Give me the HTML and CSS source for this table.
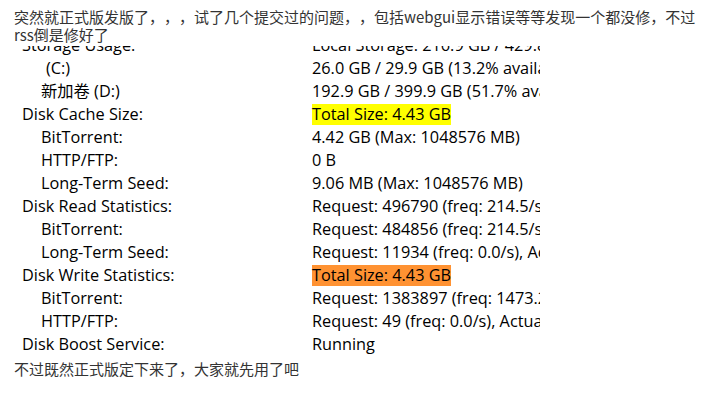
FILE: index.html
```html
<!DOCTYPE html>
<html lang="zh">
<head>
<meta charset="utf-8">
<link rel="stylesheet" href="styles.css">
</head>
<body>
<div class="post">
  <p class="post-text">突然就正式版发版了，，，试了几个提交过的问题，，包括webgui显示错误等等发现一个都没修，不过<br>rss倒是修好了</p>
  <div class="shot">
    <div class="stats">
      <div class="label l1">Storage Usage:</div><div class="value">Local Storage: 216.9 GB / 429.8 GB</div>
      <div class="label l2 drive">(C:)</div><div class="value">26.0 GB / 29.9 GB (13.2% available)</div>
      <div class="label l2">新加卷 (D:)</div><div class="value">192.9 GB / 399.9 GB (51.7% available)</div>
      <div class="label l1">Disk Cache Size:</div><div class="value"><span class="hl yellow">Total Size: 4.43 GB</span></div>
      <div class="label l2">BitTorrent:</div><div class="value">4.42 GB (Max: 1048576 MB)</div>
      <div class="label l2">HTTP/FTP:</div><div class="value">0 B</div>
      <div class="label l2">Long-Term Seed:</div><div class="value">9.06 MB (Max: 1048576 MB)</div>
      <div class="label l1">Disk Read Statistics:</div><div class="value">Request: 496790 (freq: 214.5/s), Actual: 0</div>
      <div class="label l2">BitTorrent:</div><div class="value">Request: 484856 (freq: 214.5/s), Actual: 0</div>
      <div class="label l2">Long-Term Seed:</div><div class="value">Request: 11934 (freq: 0.0/s), Actual: 0</div>
      <div class="label l1">Disk Write Statistics:</div><div class="value"><span class="hl orange">Total Size: 4.43 GB</span></div>
      <div class="label l2">BitTorrent:</div><div class="value">Request: 1383897 (freq: 1473.2/s), Actual: 0</div>
      <div class="label l2">HTTP/FTP:</div><div class="value">Request: 49 (freq: 0.0/s), Actual: 0</div>
      <div class="label l1">Disk Boost Service:</div><div class="value">Running</div>
    </div>
  </div>
  <p class="post-text">不过既然正式版定下来了，大家就先用了吧</p>
</div>
</body>
</html>
```

FILE: styles.css
```css
html, body {
  margin: 0;
  padding: 0;
  background: #ffffff;
}

.post {
  padding: 8px 0 0 14px;
}

.post-text {
  margin: 0;
  font-family: "Noto Sans CJK SC", "Noto Sans", sans-serif;
  font-size: 15px;
  line-height: 18px;
  color: #333333;
  white-space: nowrap;
  text-spacing-trim: space-all;
}

.shot {
  width: 526px;
  height: 314px;
  margin-top: 2px;
  overflow: hidden;
}

.stats {
  display: grid;
  grid-template-columns: 290px max-content;
  row-gap: 2px;
  margin-top: -11px;
  padding-left: 8px;
  font-family: "Open Sans", "Noto Sans CJK SC", sans-serif;
  font-size: 16.3px;
  color: #000000;
  white-space: nowrap;
}

.label,
.value {
  line-height: 21px;
}

.l2 {
  padding-left: 19px;
}

.drive {
  padding-left: 24px;
}

.hl {
  display: inline-block;
  line-height: 21px;
}

.yellow {
  background: #ffff00;
}

.orange {
  background: #ff9232;
}
```
